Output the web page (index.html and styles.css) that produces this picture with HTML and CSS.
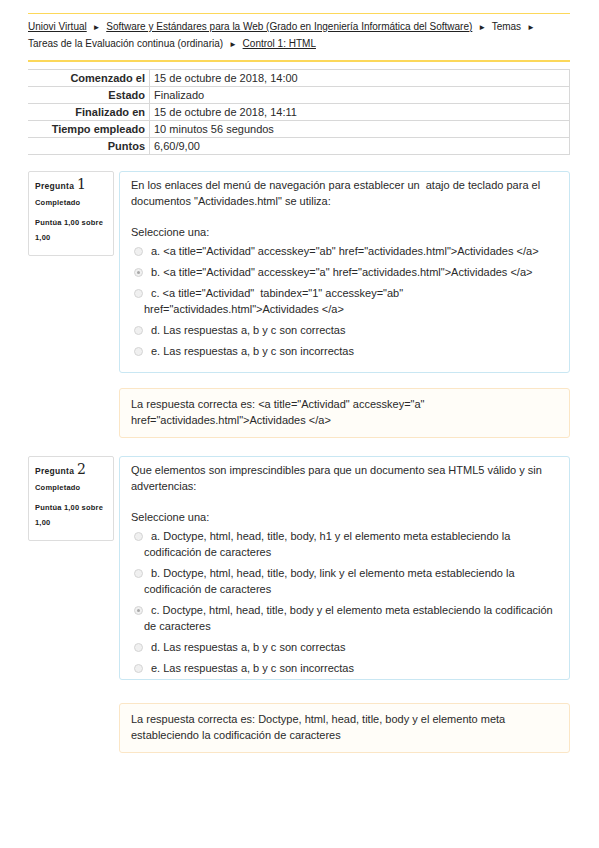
FILE: index.html
```html
<!DOCTYPE html>
<html lang="es">
<head>
<meta charset="utf-8">
<title>Control 1: HTML</title>
<link rel="stylesheet" href="styles.css">
</head>
<body>
<div class="page">
  <nav class="crumbs">
    <a href="#">Uniovi Virtual</a> <span class="sep">►</span> <a href="#">Software y Estándares para la Web (Grado en Ingeniería Informática del Software)</a> <span class="sep">►</span> Temas <span class="sep">►</span><br>
    Tareas de la Evaluación continua (ordinaria) <span class="sep">►</span> <a href="#">Control 1: HTML</a>
  </nav>

  <table class="summary">
    <tr><th>Comenzado el</th><td>15 de octubre de 2018, 14:00</td></tr>
    <tr><th>Estado</th><td>Finalizado</td></tr>
    <tr><th>Finalizado en</th><td>15 de octubre de 2018, 14:11</td></tr>
    <tr><th>Tiempo empleado</th><td>10 minutos 56 segundos</td></tr>
    <tr><th>Puntos</th><td>6,60/9,00</td></tr>
  </table>

  <section class="que">
    <div class="info">
      <div class="qno">Pregunta <span class="num">1</span></div>
      <div class="state">Completado</div>
      <div class="grade">Puntúa 1,00 sobre 1,00</div>
    </div>
    <div class="content">
      <div class="formulation">
        <div class="qtext">En los enlaces del menú de navegación para establecer un &nbsp;atajo de teclado para el documentos "Actividades.html" se utiliza:</div>
        <div class="prompt">Seleccione una:</div>
        <div class="opt"><span class="radio"></span>a. &lt;a title="Actividad" accesskey="ab" href="actividades.html"&gt;Actividades &lt;/a&gt;</div>
        <div class="opt"><span class="radio on"></span>b. &lt;a title="Actividad" accesskey="a" href="actividades.html"&gt;Actividades &lt;/a&gt;</div>
        <div class="opt"><span class="radio"></span>c. &lt;a title="Actividad" &nbsp;tabindex="1" accesskey="ab" href="actividades.html"&gt;Actividades &lt;/a&gt;</div>
        <div class="opt"><span class="radio"></span>d. Las respuestas a, b y c son correctas</div>
        <div class="opt"><span class="radio"></span>e. Las respuestas a, b y c son incorrectas</div>
      </div>
      <div class="feedback">La respuesta correcta es: &lt;a title="Actividad" accesskey="a" href="actividades.html"&gt;Actividades &lt;/a&gt;</div>
    </div>
  </section>

  <section class="que">
    <div class="info">
      <div class="qno">Pregunta <span class="num">2</span></div>
      <div class="state">Completado</div>
      <div class="grade">Puntúa 1,00 sobre 1,00</div>
    </div>
    <div class="content content-tight">
      <div class="formulation">
        <div class="qtext">Que elementos son imprescindibles para que un documento sea HTML5 válido y sin advertencias:</div>
        <div class="prompt">Seleccione una:</div>
        <div class="opt"><span class="radio"></span>a. Doctype, html, head, title, body, h1 y el elemento meta estableciendo la codificación de caracteres</div>
        <div class="opt"><span class="radio"></span>b. Doctype, html, head, title, body, link y el elemento meta estableciendo la codificación de caracteres</div>
        <div class="opt"><span class="radio on"></span>c. Doctype, html, head, title, body y el elemento meta estableciendo la codificación de caracteres</div>
        <div class="opt"><span class="radio"></span>d. Las respuestas a, b y c son correctas</div>
        <div class="opt"><span class="radio"></span>e. Las respuestas a, b y c son incorrectas</div>
      </div>
      <div class="feedback">La respuesta correcta es: Doctype, html, head, title, body y el elemento meta estableciendo la codificación de caracteres</div>
    </div>
  </section>
</div>
</body>
</html>
```

FILE: styles.css
```css
html, body {
  margin: 0;
  padding: 0;
  background: #ffffff;
}

body {
  font-family: "Liberation Sans", Arial, sans-serif;
  color: #2a2a2a;
  font-size: 11px;
}

.page {
  width: 542px;
  margin: 0 0 0 28px;
  padding-top: 13px;
}

.crumbs {
  border-top: 1px solid #fcd85a;
  border-bottom: 2px solid #fcd85a;
  padding: 4px 0 8px;
  font-size: 10px;
  line-height: 17px;
  color: #222;
}

.crumbs a {
  color: #222;
  text-decoration: underline;
}

.crumbs .sep {
  font-size: 8px;
  line-height: 1;
  margin: 0 3px;
}

.summary {
  width: 100%;
  margin-top: 7px;
  border-collapse: collapse;
  font-size: 11px;
}

.summary th,
.summary td {
  height: 16px;
  padding: 0 4px;
  border: 1px solid #d8d8d8;
  line-height: 15px;
}

.summary th {
  width: 113px;
  text-align: right;
  font-weight: bold;
  border-left: none;
}

.que {
  display: flex;
  gap: 5px;
  margin-top: 16px;
  align-items: flex-start;
}

.que + .que {
  margin-top: 18px;
}

.info {
  width: 86px;
  flex: none;
  box-sizing: border-box;
  border: 1px solid #dddddd;
  border-radius: 2px;
  background: #ffffff;
  padding: 4px 6px 10px;
  font-weight: bold;
  color: #222;
}

.qno {
  font-size: 8.5px;
  line-height: 16px;
  letter-spacing: 0.3px;
}

.qno .num {
  font-size: 14px;
  font-weight: normal;
  font-family: "DejaVu Serif", serif;
  letter-spacing: 0;
}

.state {
  font-size: 7.5px;
  line-height: 11px;
  margin-top: 3px;
  letter-spacing: 0.2px;
}

.grade {
  font-size: 7.5px;
  line-height: 15px;
  margin-top: 7px;
  letter-spacing: 0.2px;
}

.content {
  flex: 1;
  display: flex;
  flex-direction: column;
  gap: 15px;
}

.formulation {
  border: 1px solid #c9e7f3;
  border-radius: 3px;
  padding: 5px 12px 13px 11px;
  line-height: 16px;
}

.content-tight {
  gap: 23px;
}

.content-tight .formulation {
  padding-bottom: 3px;
}

.prompt {
  margin-top: 15px;
  margin-bottom: 3px;
}

.opt {
  padding-left: 13px;
  margin-bottom: 5px;
}

.opt:last-child {
  margin-bottom: 0;
}

.radio {
  display: inline-block;
  box-sizing: border-box;
  width: 9px;
  height: 9px;
  margin-left: -10px;
  margin-right: 8px;
  border: 1px solid #d4d4d4;
  border-radius: 50%;
  background: #f0f0f0;
  vertical-align: -1px;
  position: relative;
}

.radio.on::after {
  content: "";
  position: absolute;
  left: 2px;
  top: 2px;
  width: 3px;
  height: 3px;
  border-radius: 50%;
  background: #a8a8a8;
}

.feedback {
  border: 1px solid #fbe6c6;
  border-radius: 3px;
  background: #fffdf8;
  padding: 7px 12px 9px 11px;
  line-height: 16px;
}
```
